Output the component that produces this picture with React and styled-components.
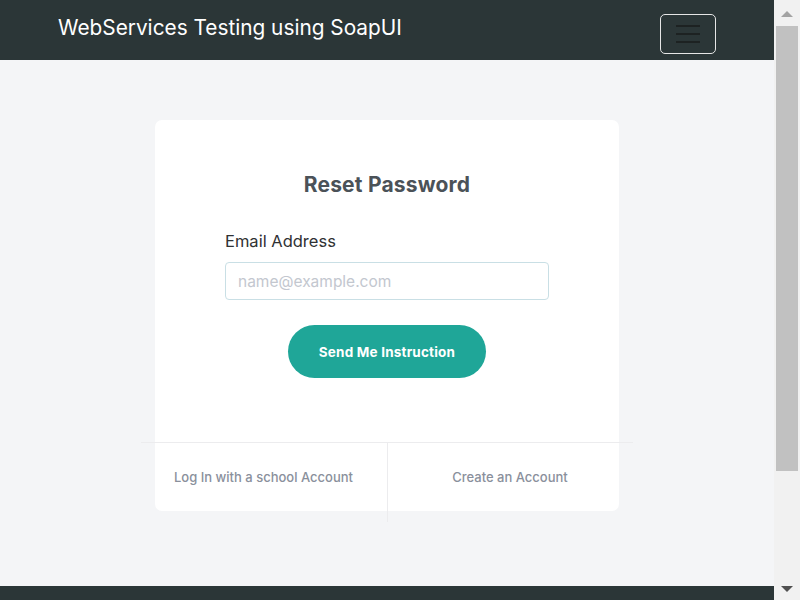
import React from "react";
import styled, { createGlobalStyle } from "styled-components";

const Global = createGlobalStyle`
  html, body { margin: 0; padding: 0; overflow: hidden; }
  body {
    background: #f4f5f7;
    font-family: "Inter", "Noto Sans", "Liberation Sans", sans-serif;
  }
  * { box-sizing: border-box; }
`;

const Viewport = styled.div`
  height: 100vh;
  display: flex;
`;

const Scroller = styled.div`
  flex: 1;
  min-width: 0;
  overflow-y: auto;
  scrollbar-width: none;
  &::-webkit-scrollbar { display: none; }
`;

const ScrollRail = styled.div`
  width: 26px;
  flex: none;
  background: #f1f1f1;
  display: flex;
  flex-direction: column;
`;

const ArrowButton = styled.div`
  height: 26px;
  flex: none;
  display: flex;
  align-items: center;
  justify-content: center;
  padding-top: ${(p) => (p.$down ? "4px" : "2px")};
`;

const Track = styled.div`
  flex: 1;
  padding: 0 2px;
`;

const Thumb = styled.div`
  height: 445px;
  background: #c1c1c1;
`;

const Page = styled.div`
  min-height: 750px;
  display: flex;
  flex-direction: column;
`;

const NavBar = styled.header`
  height: 60px;
  background: #2b3637;
  display: flex;
  align-items: center;
  justify-content: space-between;
  padding: 0 58px;
`;

const Brand = styled.div`
  color: #ffffff;
  font-size: 20.8px;
  margin-top: -6px;
`;

const Toggler = styled.button`
  width: 56px;
  height: 40px;
  border: 1px solid #e6e6e6;
  border-radius: 5px;
  background: transparent;
  display: flex;
  flex-direction: column;
  align-items: center;
  justify-content: center;
  gap: 6px;
  padding: 0;
  margin-top: 8px;
`;

const Bar = styled.span`
  display: block;
  width: 24px;
  height: 2px;
  background: #1d2222;
`;

const Main = styled.main`
  flex: 1;
  padding: 60px 0 75px;
  display: flex;
  justify-content: center;
  align-items: flex-start;
`;

const Card = styled.section`
  width: 464px;
  background: #ffffff;
  border-radius: 7px;
  padding-top: 52px;
  display: flex;
  flex-direction: column;
  align-items: center;
`;

const Title = styled.h2`
  margin: 0;
  font-size: 21px;
  font-weight: 700;
  letter-spacing: 0.2px;
  color: #4b5258;
  line-height: 25px;
`;

const Form = styled.form`
  width: 324px;
  margin-top: 32px;
  display: flex;
  flex-direction: column;
`;

const Label = styled.label`
  font-size: 16.5px;
  color: #2f3133;
  line-height: 24px;
  margin-bottom: 9px;
`;

const Input = styled.input`
  width: 100%;
  height: 38px;
  border: 1px solid #c9dfe5;
  border-radius: 4px;
  padding: 0 12px;
  font-family: inherit;
  font-size: 15.5px;
  color: #333;
  outline: none;
  caret-color: #222;
  &::placeholder { color: #c3c7cf; }
`;

const Submit = styled.button`
  align-self: center;
  margin-top: 25px;
  width: 198px;
  height: 53px;
  border: none;
  border-radius: 27px;
  background: #1fa698;
  color: #ffffff;
  font-family: inherit;
  font-size: 13.5px;
  font-weight: 700;
  letter-spacing: 0.2px;
`;

const LinkRow = styled.div`
  margin-top: 64px;
  width: calc(100% + 28px);
  margin-left: -1px;
  border-top: 1px solid #ececee;
  display: grid;
  grid-template-columns: 1fr 1fr;
  margin-bottom: -11px;
`;

const LinkCell = styled.a`
  height: 79px;
  display: flex;
  align-items: center;
  justify-content: center;
  padding-bottom: 11px;
  font-size: 13px;
  font-weight: 500;
  color: #8a909c;
  text-decoration: none;
  border-left: ${(p) => (p.$divider ? "1px solid #ececee" : "none")};
`;

const Footer = styled.footer`
  height: 164px;
  background: #2b3637;
`;

const Triangle = ({ down, color }) => (
  <svg width="12" height="6" viewBox="0 0 12 6" aria-hidden="true">
    <polygon points={down ? "0,0 12,0 6,6" : "0,6 12,6 6,0"} fill={color} />
  </svg>
);

export default function App() {
  return (
    <>
      <Global />
      <Viewport>
        <Scroller>
          <Page>
            <NavBar>
              <Brand>WebServices Testing using SoapUI</Brand>
              <Toggler aria-label="menu">
                <Bar />
                <Bar />
                <Bar />
              </Toggler>
            </NavBar>
            <Main>
              <Card>
                <Title>Reset Password</Title>
                <Form onSubmit={(e) => e.preventDefault()}>
                  <Label htmlFor="email">Email Address</Label>
                  <Input id="email" type="email" placeholder="name@example.com" autoFocus />
                  <Submit type="submit">Send Me Instruction</Submit>
                </Form>
                <LinkRow>
                  <LinkCell href="#">Log In with a school Account</LinkCell>
                  <LinkCell href="#" $divider>Create an Account</LinkCell>
                </LinkRow>
              </Card>
            </Main>
            <Footer />
          </Page>
        </Scroller>
        <ScrollRail aria-hidden="true">
          <ArrowButton>
            <Triangle color="#a3a3a3" />
          </ArrowButton>
          <Track>
            <Thumb />
          </Track>
          <ArrowButton $down>
            <Triangle down color="#505050" />
          </ArrowButton>
        </ScrollRail>
      </Viewport>
    </>
  );
}
